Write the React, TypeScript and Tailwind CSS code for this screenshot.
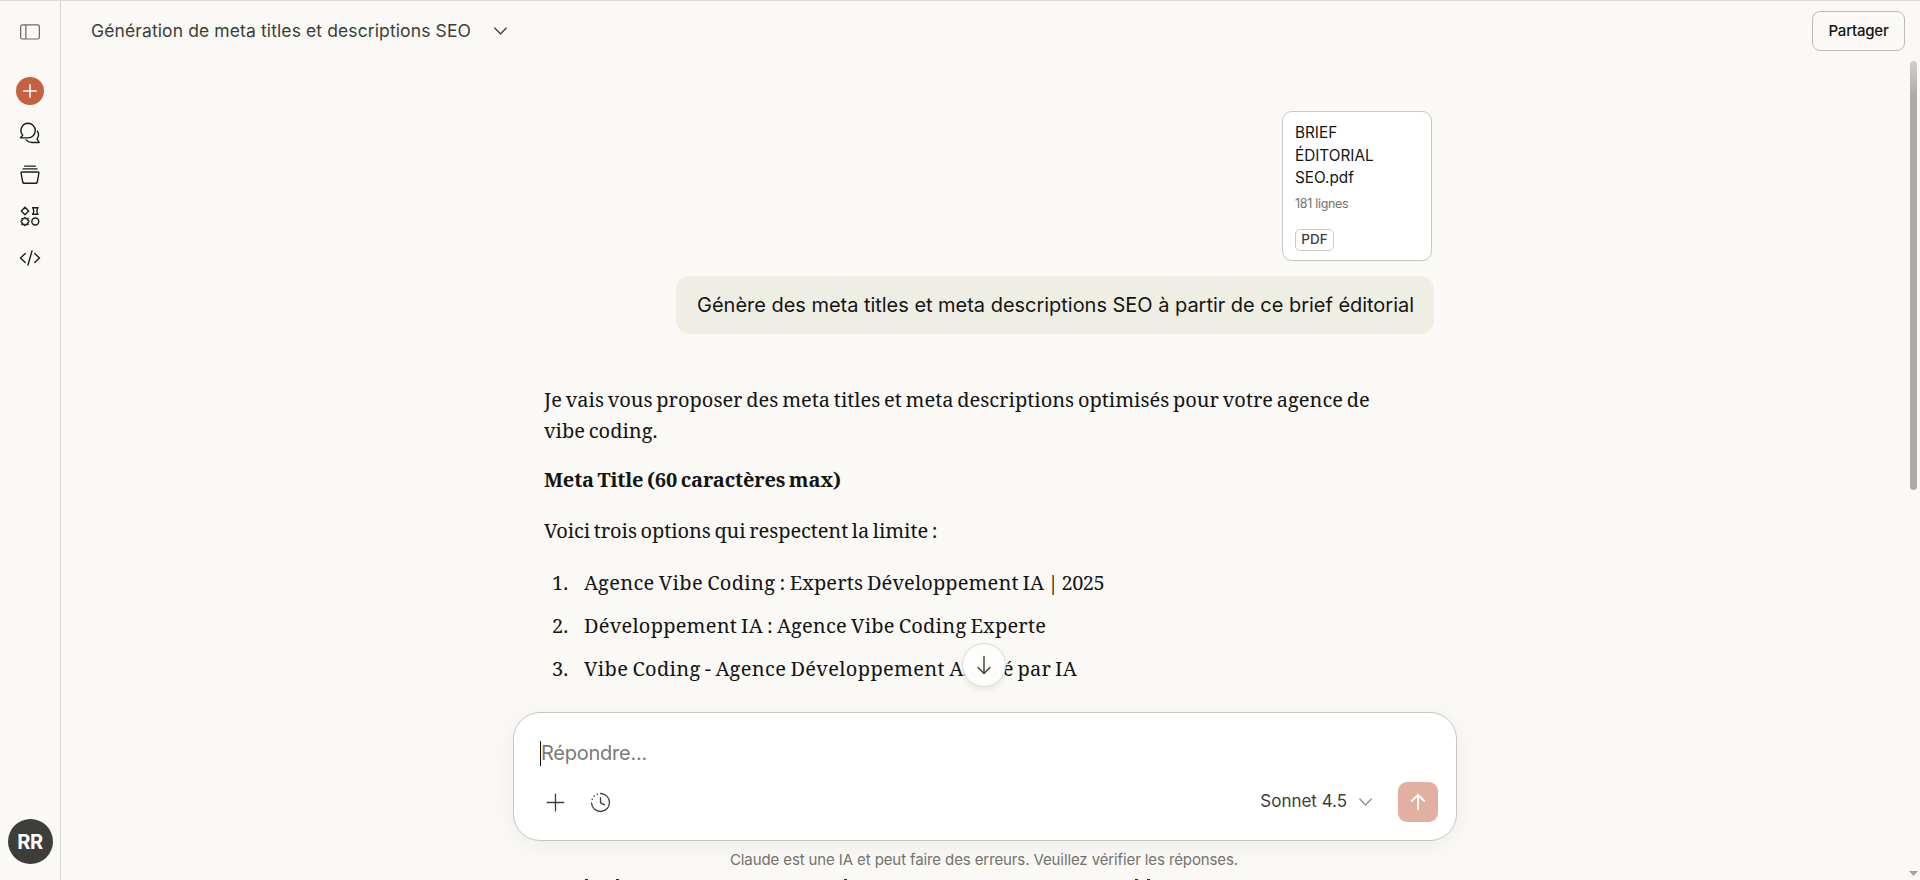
import type { ReactNode } from "react";

function SidebarItem({ label, children }: { label: string; children: ReactNode }) {
  return (
    <button aria-label={label} className="flex h-[41.6px] w-full items-center justify-center">
      {children}
    </button>
  );
}

function PanelIcon() {
  return (
    <svg width="22" height="18" viewBox="0 0 22 18" fill="none" stroke="#6b6a66" strokeWidth="1.2">
      <rect x="1.6" y="1.8" width="18.8" height="14.2" rx="1.8" />
      <path d="M6.8 1.8V16" />
    </svg>
  );
}

function ChatsIcon() {
  return (
    <svg width="22" height="22" viewBox="0 0 22 22" fill="none" stroke="#1c1c1a" strokeWidth="1.4" strokeLinejoin="round" strokeLinecap="round">
      <path d="M9 1.3a7.3 7.3 0 1 1 0 14.6H1.5l2.2-2.6A7.3 7.3 0 0 1 9 1.3Z" />
      <path d="M18.4 9.2c1.5 2.3 1.3 5.5-.4 7.7l2.2 3.6h-7.4c-2.5 0-4.3-.9-5.7-2.6" />
    </svg>
  );
}

function ProjectsIcon() {
  return (
    <svg width="22" height="22" viewBox="0 0 22 22" fill="none" stroke="#1c1c1a" strokeWidth="1.4" strokeLinejoin="round" strokeLinecap="round">
      <path d="M5.6 2.1h10.8M4 4.9h14" />
      <path d="M3 8h16c.7 0 1 .4.9 1l-1.6 9c-.2.9-.7 1.3-1.5 1.3H5.2c-.8 0-1.3-.4-1.5-1.3L2.1 9c-.1-.6.2-1 .9-1Z" />
    </svg>
  );
}

function ArtifactsIcon() {
  return (
    <svg width="22" height="22" viewBox="0 0 22 22" fill="none" stroke="#1c1c1a" strokeWidth="1.4" strokeLinejoin="round">
      <path d="M6 2.3 9.7 6 6 9.7 2.3 6Z" />
      <path d="M13 2.8h6.6M13 9.2h6.6M14 2.8c1 2.1 1 4.3 0 6.4M18.6 2.8c-1 2.1-1 4.3 0 6.4" />
      <path d="m6 12.4 1.2 1.3 1.8-.2-.2 1.8L10 16.5l-1.2 1.2.2 1.8-1.8-.2L6 20.6l-1.2-1.3-1.8.2.2-1.8L2 16.5l1.2-1.2-.2-1.8 1.8.2Z" />
      <circle cx="16.3" cy="16.5" r="3.5" />
    </svg>
  );
}

function CodeIcon() {
  return (
    <svg width="22" height="18" viewBox="0 0 22 18" fill="none" stroke="#1c1c1a" strokeWidth="1.4" strokeLinecap="round" strokeLinejoin="round">
      <path d="M6.2 4.6 1.5 9l4.7 4.4M15.8 4.6 20.5 9l-4.7 4.4M13 2 9 16" />
    </svg>
  );
}

function Sidebar() {
  return (
    <aside className="flex w-[61px] shrink-0 flex-col items-center border-r border-[#d5d4cf] bg-[#faf9f5] pt-[10px] pb-[16px]">
      <SidebarItem label="Barre latérale">
        <PanelIcon />
      </SidebarItem>
      <div className="h-[18px]" />
      <SidebarItem label="Nouvelle conversation">
        <span className="flex size-7 items-center justify-center rounded-full bg-[#c6613f]">
          <svg width="14" height="14" viewBox="0 0 14 14" stroke="#fff" strokeWidth="1.5" strokeLinecap="round">
            <path d="M7 .8v12.4M.8 7h12.4" />
          </svg>
        </span>
      </SidebarItem>
      <SidebarItem label="Conversations">
        <ChatsIcon />
      </SidebarItem>
      <SidebarItem label="Projets">
        <ProjectsIcon />
      </SidebarItem>
      <SidebarItem label="Artefacts">
        <ArtifactsIcon />
      </SidebarItem>
      <SidebarItem label="Code">
        <CodeIcon />
      </SidebarItem>
      <div className="mt-auto flex size-[45px] items-center justify-center rounded-full bg-[#3d3d3a] text-[20px] font-bold tracking-[-0.4px] text-white">
        RR
      </div>
    </aside>
  );
}

function Header() {
  return (
    <header className="flex h-[60px] shrink-0 items-center pr-[15px] pl-[30px]">
      <h1 className="text-[17.5px] leading-6 tracking-[0.11px] whitespace-nowrap text-[#3d3d3a]">
        Génération de meta titles et descriptions SEO
      </h1>
      <svg className="ml-[22px]" width="15" height="10" viewBox="0 0 15 10" fill="none" stroke="#3d3d3a" strokeWidth="1.3" strokeLinecap="round" strokeLinejoin="round">
        <path d="m1.8 2 5.7 6 5.7-6" />
      </svg>
      <button className="ml-auto flex h-10 w-[93px] items-center justify-center rounded-[8px] border border-[#bdbcb6] text-[15px] font-medium tracking-[-0.22px] text-[#141413]">
        Partager
      </button>
    </header>
  );
}

function Attachment() {
  return (
    <div className="flex size-[150px] flex-col items-start self-end rounded-[10px] border border-[#c9c8c4] bg-white px-3 pt-[10px] text-[15.3px] leading-[22.5px] text-[#141413] shadow-[0_1px_2px_rgba(0,0,0,0.04)]">
      <p className="w-[100px]">
        BRIEF
        <br />
        ÉDITORIAL
        <br />
        SEO.pdf
      </p>
      <p className="mt-[4px] text-[12.5px] leading-5 tracking-[-0.3px] text-[#73726c]">181 lignes</p>
      <span className="mt-[15px] flex h-[22px] w-[39px] items-center justify-center rounded-[5px] border border-[#c9c8c4] text-[13.5px] font-medium text-[#3d3d3a]">
        PDF
      </span>
    </div>
  );
}

function Conversation() {
  return (
    <div className="mx-auto flex w-[898px] flex-col pt-[50px]">
      <div className="flex flex-col pr-[2px]">
        <Attachment />
      </div>
      <div className="mt-[15px] flex h-[58px] items-center self-end rounded-[14px] bg-[#efeee5] pr-[20px] pl-[21px] text-[20px] tracking-[-0.027px] whitespace-nowrap text-[#141413]">
        Génère des meta titles et meta descriptions SEO à partir de ce brief éditorial
      </div>
      <div className="mt-[51px] pl-[8px] font-['Noto_Serif','Liberation_Serif',serif] text-[20px] leading-[30.5px] [word-spacing:-1.4px] text-[#141413]">
        <p>
          Je vais vous proposer des meta titles et meta descriptions optimisés pour votre agence de
          <br />
          vibe coding.
        </p>
        <p className="mt-[19px] font-bold tracking-[-0.17px]">Meta Title (60 caractères max)</p>
        <p className="mt-[20px] tracking-[-0.08px]">Voici trois options qui respectent la limite :</p>
        <ol className="mt-[22px] flex flex-col gap-[12.5px]">
          <li className="flex">
            <span className="w-[40px] pl-[8px]">1.</span>
            <span className="tracking-[0.12px]">
              <span className="tracking-[0.34px]">Agence Vibe Coding : </span>
              Experts Développement IA
              <span className="tracking-[-0.5px]"> | 2025</span>
            </span>
          </li>
          <li className="flex">
            <span className="w-[40px] pl-[8px]">2.</span>
            <span className="tracking-[0.23px]">Développement IA : Agence Vibe Coding Experte</span>
          </li>
          <li className="flex">
            <span className="w-[40px] pl-[8px]">3.</span>
            <span className="tracking-[0.23px]">
              <span className="tracking-[0.35px]">Vibe Coding - Agence Développement </span>
              <span className="tracking-[-0.15px]">Assisté</span> par IA
            </span>
          </li>
        </ol>
      </div>
    </div>
  );
}

function Composer() {
  return (
    <div className="flex h-[129px] w-[944px] flex-col rounded-[27px] border border-[#c6c5c1] bg-white pr-[18px] pl-[26px] shadow-[0_5px_25px_rgba(0,0,0,0.055)]">
      <div className="mt-[27px] flex h-[26px] items-center">
        <span className="h-[25px] w-px bg-[#141413]" />
        <span className="text-[20px] leading-[26px] tracking-[-0.25px] text-[#7b7a75]">Répondre...</span>
      </div>
      <div className="mt-[16px] flex h-10 items-center">
        <svg className="ml-[6px]" width="19" height="19" viewBox="0 0 19 19" stroke="#3d3d3a" strokeWidth="1.3" strokeLinecap="round">
          <path d="M9.5 1.2v16.6M1.2 9.5h16.6" />
        </svg>
        <svg className="ml-[25px]" width="21" height="21" viewBox="0 0 21 21" fill="none" stroke="#3d3d3a" strokeWidth="1.3" strokeLinecap="round" strokeLinejoin="round">
          <path d="M10.5 1.5a9 9 0 1 1-9 9.3" />
          <path d="M10.5 5.6v5.2l4 2" />
          <path d="M7.2 2.2h.01M4.2 4.1h.01M2.2 7.2h.01" strokeWidth="1.6" />
        </svg>
        <span className="ml-auto text-[17px] tracking-[-0.02px] text-[#3d3d3a]">Sonnet 4.5</span>
        <svg className="ml-[11px]" width="15" height="10" viewBox="0 0 15 10" fill="none" stroke="#8a8984" strokeWidth="1.2" strokeLinecap="round" strokeLinejoin="round">
          <path d="m1.8 2 5.7 6 5.7-6" />
        </svg>
        <button aria-label="Envoyer" className="ml-[25px] flex size-10 items-center justify-center rounded-[9px] bg-[#e2b0a0]">
          <svg width="16" height="18" viewBox="0 0 16 18" fill="none" stroke="#fff" strokeWidth="1.9" strokeLinecap="round" strokeLinejoin="round">
            <path d="M8 16V2M1.8 8 8 1.8 14.2 8" />
          </svg>
        </button>
      </div>
    </div>
  );
}

function Scrollbar() {
  return (
    <div className="absolute top-[60px] right-0 bottom-0 flex w-[13px] flex-col items-center">
      <div className="h-[429px] w-[7px] rounded-full bg-linear-to-b from-[#d0cfcb] via-[#acaba7] via-8% to-[#acaba7]" />
      <svg className="mt-auto mb-[4px]" width="9" height="5" viewBox="0 0 9 5" fill="#a3a29e">
        <path d="M0 0h9L4.5 5Z" />
      </svg>
    </div>
  );
}

export default function App() {
  return (
    <div className="flex h-[880px] w-[1920px] overflow-hidden border-t border-[#dedddb] bg-[#faf9f5] font-['Inter','Liberation_Sans',sans-serif]">
      <Sidebar />
      <main className="relative flex min-w-0 flex-1 flex-col">
        <Header />
        <div className="min-h-0 flex-1 pr-[11px]">
          <Conversation />
        </div>
        <div className="absolute right-[11px] bottom-0 left-0 flex flex-col items-center">
          <button aria-label="Défiler vers le bas" className="mr-[2px] mb-[25px] flex size-[44px] items-center justify-center rounded-full border border-[#dddcd8] bg-[#fdfdfc] shadow-[0_3px_6px_rgba(0,0,0,0.08)]">
            <svg width="16" height="20" viewBox="0 0 16 20" fill="none" stroke="#3d3d3a" strokeWidth="1.4" strokeLinecap="round" strokeLinejoin="round">
              <path d="M8 1.5v17M2 12.5l6 6 6-6" />
            </svg>
          </button>
          <Composer />
          <p className="mt-[8px] h-[31px] pr-[2px] text-[15px] leading-[22px] tracking-[-0.11px] text-[#73726c]">
            Claude est une IA et peut faire des erreurs. Veuillez vérifier les réponses.
          </p>
        </div>
        <div className="absolute bottom-0 left-[524px] flex h-px">
          <span className="w-[3px] bg-[#2a2a28]" />
          <span className="ml-[28px] w-[3px] bg-[#2a2a28]" />
          <span className="ml-[225px] w-[3px] bg-[#2a2a28]" />
          <span className="ml-[288px] w-[3px] bg-[#2a2a28]" />
          <span className="ml-[9px] w-[3px] bg-[#2a2a28]" />
        </div>
        <Scrollbar />
      </main>
    </div>
  );
}
